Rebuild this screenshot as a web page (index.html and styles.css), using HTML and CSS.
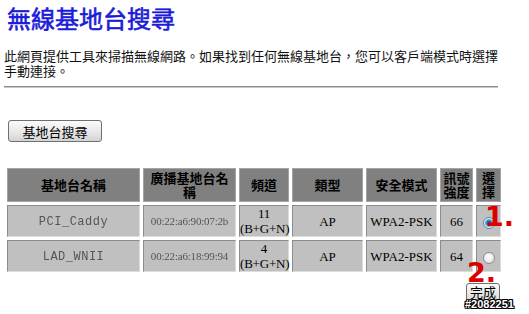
FILE: index.html
```html
<!DOCTYPE html>
<html lang="zh-Hant">
<head>
<meta charset="utf-8">
<title>無線基地台搜尋</title>
<link rel="stylesheet" href="styles.css">
</head>
<body>
<div class="page">
  <h1 class="title">無線基地台搜尋</h1>
  <p class="intro">此網頁提供工具來掃描無線網路。如果找到任何無線基地台，您可以客戶端模式時選擇手動連接。</p>
  <hr class="rule">
  <div class="actions"><button type="button" class="btn btn-scan">基地台搜尋</button></div>
  <table class="survey">
    <colgroup>
      <col class="c-name"><col class="c-bssid"><col class="c-chan"><col class="c-type"><col class="c-sec"><col class="c-sig"><col class="c-sel">
    </colgroup>
    <thead>
      <tr class="head-row">
        <th>基地台名稱</th><th>廣播基地台名稱</th><th>頻道</th><th>類型</th><th>安全模式</th><th>訊號強度</th><th>選擇</th>
      </tr>
    </thead>
    <tbody>
      <tr class="data-row">
        <td><span class="masked mono">PCI_Caddy</span></td>
        <td><span class="masked">00:22:a6:90:07:2b</span></td>
        <td class="chan">11<br>(B+G+N)</td>
        <td>AP</td>
        <td>WPA2-PSK</td>
        <td>66</td>
        <td><input type="radio" name="sel" class="radio" checked></td>
      </tr>
      <tr class="data-row">
        <td><span class="masked mono">LAD_WNII</span></td>
        <td><span class="masked">00:22:a6:18:99:94</span></td>
        <td class="chan">4<br>(B+G+N)</td>
        <td>AP</td>
        <td>WPA2-PSK</td>
        <td>64</td>
        <td><input type="radio" name="sel" class="radio"></td>
      </tr>
    </tbody>
  </table>
  <div class="finish"><button type="button" class="btn btn-done">完成</button></div>
</div>
<span class="mark mark-1">1.</span>
<span class="mark mark-2">2.</span>
<span class="watermark">#2082251</span>
</body>
</html>
```

FILE: styles.css
```css
html, body {
  margin: 0;
  padding: 0;
  background: #ffffff;
}

body {
  font-family: "Noto Sans CJK TC", "Noto Sans", sans-serif;
  color: #000;
  position: relative;
  width: 529px;
  height: 314px;
  overflow: hidden;
}

.page {
  padding-left: 4px;
  width: 500px;
}

.title {
  margin: 0;
  padding: 4px 0 0 3px;
  font-size: 24px;
  line-height: 28px;
  font-weight: 400;
  color: #1c1cd8;
  -webkit-text-stroke: 0.6px #1c1cd8;
  letter-spacing: 0;
}

.intro {
  margin: 16px 0 0 0;
  font-size: 13px;
  line-height: 15px;
  color: #111;
}

.rule {
  margin: 8px 0 0 0;
  width: 494px;
  height: 0;
  border: 0;
  border-top: 1px solid #8e8e8e;
  border-bottom: 1px solid #c8c8c8;
}

.actions {
  margin-top: 32px;
  padding-left: 4px;
  height: 22px;
}

.btn {
  font-family: "Noto Sans CJK TC", sans-serif;
  font-size: 13px;
  line-height: 15px;
  color: #000;
  background: linear-gradient(#fbfbfb, #e6e6e6 60%, #d2d2d2);
  border: 1px solid #6f6f6f;
  border-radius: 3px;
  padding: 0;
  margin: 0;
}

.btn-scan {
  width: 94px;
  height: 22px;
  display: block;
}

.survey {
  margin-top: 23px;
  border-collapse: separate;
  border-spacing: 3px;
  table-layout: fixed;
  width: 500px;
}

.c-name { width: 133px; }
.c-bssid { width: 93px; }
.c-chan { width: 50px; }
.c-type { width: 71px; }
.c-sec { width: 71px; }
.c-sig { width: 33px; }
.c-sel { width: 25px; }

.head-row { height: 34px; }
.data-row { height: 32px; }

.survey th {
  background: #808080;
  border: 1px solid #a4a4a4;
  font-size: 13px;
  line-height: 14px;
  font-weight: 700;
  color: #000;
  padding: 0 1px;
  text-align: center;
  vertical-align: middle;
}

.survey td {
  background: #c0c0c0;
  border-style: solid;
  border-width: 1px;
  border-color: #8c8c8c #dcdcdc #dcdcdc #8c8c8c;
  font-family: "Liberation Serif", serif;
  font-size: 13px;
  line-height: 15px;
  color: #000;
  padding: 0;
  text-align: center;
  vertical-align: middle;
}

.survey td.chan {
  letter-spacing: -0.2px;
}

.masked {
  color: #555;
  filter: blur(0.7px);
  font-size: 11px;
  letter-spacing: -0.2px;
}

.masked.mono {
  font-family: "Liberation Mono", monospace;
  font-size: 12px;
  letter-spacing: 0.5px;
}

.radio {
  -webkit-appearance: none;
  appearance: none;
  width: 12px;
  height: 12px;
  margin: 0;
  border: 1px solid #8f8f8f;
  border-radius: 50%;
  background: radial-gradient(circle at 45% 40%, #ffffff 0, #f2f2f2 40%, #cfcfcf 100%);
  vertical-align: middle;
  display: inline-block;
}

.radio:checked {
  border-color: #5a7fa6;
  background: radial-gradient(circle at 50% 50%, #0c4f8f 0, #1f6fb8 2px, #6fa8dc 3.5px, #e8f0f8 4.5px, #ffffff 5px);
}

.finish {
  margin-top: 8px;
  padding-right: 4px;
  text-align: right;
}

.btn-done {
  width: 34px;
  height: 19px;
  line-height: 16px;
  padding: 0 0 1px 0;
  vertical-align: top;
}

.mark {
  position: absolute;
  font-family: "DejaVu Sans", sans-serif;
  font-weight: 700;
  font-size: 27px;
  line-height: 27px;
  color: #dd0000;
  z-index: 2;
}

.mark-1 {
  left: 485px;
  top: 203px;
}

.mark-2 {
  left: 467px;
  top: 259px;
}

.watermark {
  position: absolute;
  left: 465px;
  top: 298px;
  font-family: "Liberation Sans", sans-serif;
  font-weight: 700;
  font-size: 11px;
  line-height: 12px;
  color: #ffffff;
  text-shadow: -1px 0 0 #000, 1px 0 0 #000, 0 -1px 0 #000, 0 1px 0 #000, -1px -1px 0 #000, 1px 1px 0 #000, -1px 1px 0 #000, 1px -1px 0 #000;
  z-index: 3;
}
```
